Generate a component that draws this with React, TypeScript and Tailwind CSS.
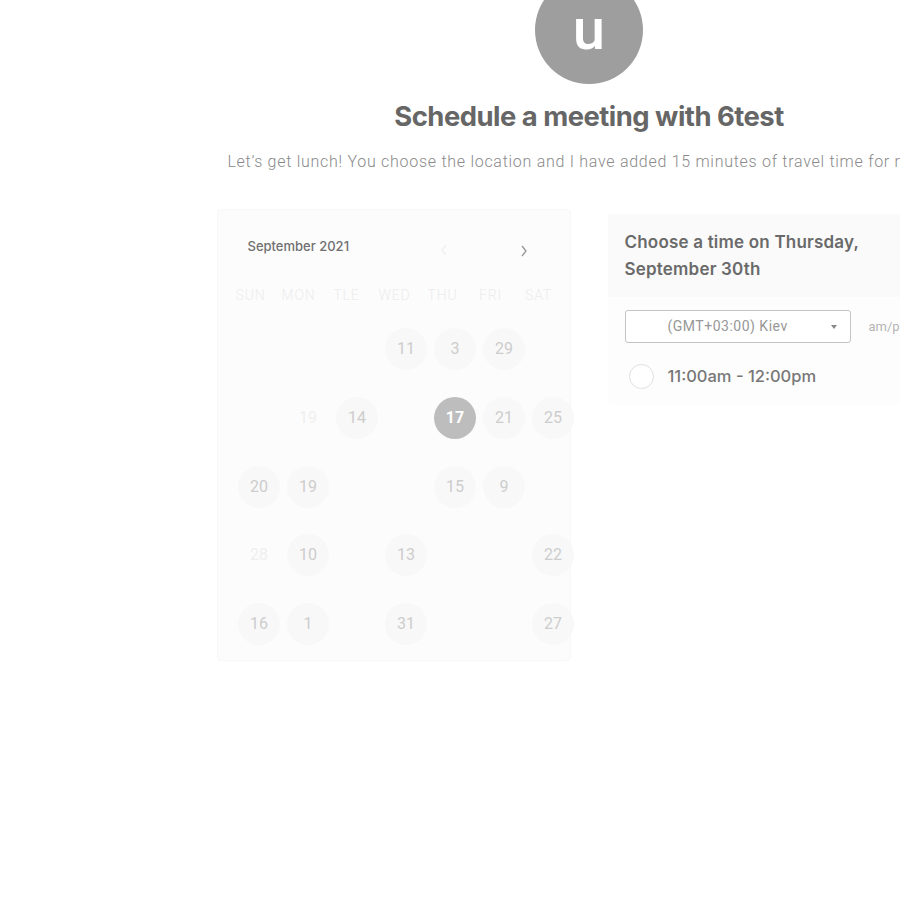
const days = [
  { d: '11', col: 4, row: 1, kind: 'day' },
  { d: '3', col: 5, row: 1, kind: 'day' },
  { d: '29', col: 6, row: 1, kind: 'day' },
  { d: '19', col: 2, row: 2, kind: 'ghost' },
  { d: '14', col: 3, row: 2, kind: 'day' },
  { d: '17', col: 5, row: 2, kind: 'selected' },
  { d: '21', col: 6, row: 2, kind: 'day' },
  { d: '25', col: 7, row: 2, kind: 'day' },
  { d: '20', col: 1, row: 3, kind: 'day' },
  { d: '19', col: 2, row: 3, kind: 'day' },
  { d: '15', col: 5, row: 3, kind: 'day' },
  { d: '9', col: 6, row: 3, kind: 'day' },
  { d: '28', col: 1, row: 4, kind: 'ghost' },
  { d: '10', col: 2, row: 4, kind: 'day' },
  { d: '13', col: 4, row: 4, kind: 'day' },
  { d: '22', col: 7, row: 4, kind: 'day' },
  { d: '16', col: 1, row: 5, kind: 'day' },
  { d: '1', col: 2, row: 5, kind: 'day' },
  { d: '31', col: 4, row: 5, kind: 'day' },
  { d: '27', col: 7, row: 5, kind: 'day' },
];

const colClass: Record<number, string> = {
  1: 'col-start-1',
  2: 'col-start-2',
  3: 'col-start-3',
  4: 'col-start-4',
  5: 'col-start-5',
  6: 'col-start-6',
  7: 'col-start-7',
};
const rowClass: Record<number, string> = {
  1: 'row-start-1',
  2: 'row-start-2',
  3: 'row-start-3',
  4: 'row-start-4',
  5: 'row-start-5',
};

const weekdays = ['SUN', 'MON', 'TLE', 'WED', 'THU', 'FRI', 'SAT'];

function DayCell({ d, col, row, kind }: { d: string; col: number; row: number; kind: string }) {
  const base = 'w-[42px] h-[42px] rounded-full flex items-center justify-center text-[16px]';
  let look = 'bg-[#f8f8f8] text-[#cdcdcd]';
  if (kind === 'selected') look = 'bg-[#bdbdbd] text-white font-bold';
  if (kind === 'ghost') look = 'text-[#efefef]';
  return (
    <div className={`${colClass[col]} ${rowClass[row]} flex items-center justify-center`}>
      <div className={`${base} ${look}`}>{d}</div>
    </div>
  );
}

export default function App() {
  return (
    <div className="w-[900px] h-[900px] overflow-hidden bg-white" style={{ fontFamily: 'Roboto, sans-serif' }}>
      <div className="w-[1178px] flex flex-col items-center">
        <div className="-mt-6 w-[108px] h-[108px] rounded-full bg-[#9e9e9e] flex items-center justify-center text-white">
          <span className="-mt-[2px] text-[58px] font-medium leading-[40px]">u</span>
        </div>

        <h1
          className="mt-[16px] text-[27.4px] font-bold text-[#666666] leading-[32px] tracking-[-0.5px]"
          style={{ fontFamily: 'Inter, sans-serif' }}
        >
          Schedule a meeting with 6test
        </h1>

        <p className="mt-[18px] text-[16px] font-light text-[#8a8a8a] leading-[24px] tracking-[0.72px] whitespace-nowrap">
          Let’s get lunch! You choose the location and I have added 15 minutes of travel time for myself.
        </p>

        <div className="mt-[35px] flex items-start gap-[37px]">
          {/* calendar */}
          <div className="w-[354px] h-[452px] bg-[#fcfcfc] border border-[#f7f7f7] rounded-sm">
            <div className="flex items-center h-[74px] pl-[30px]">
              <span className="text-[13px] font-medium text-[#707070]" style={{ fontFamily: 'Inter, sans-serif' }}>
                September 2021
              </span>
              <span className="ml-[90px] text-[#f0f0f0] mt-[6px]">
                <svg width="10" height="14" viewBox="0 0 10 14" fill="none" stroke="currentColor" strokeWidth="1.4">
                  <path d="M7 2 L3 7 L7 12" />
                </svg>
              </span>
              <span className="ml-[70px] text-[#9a9a9a] mt-[8px]">
                <svg width="10" height="14" viewBox="0 0 10 14" fill="none" stroke="currentColor" strokeWidth="1.4">
                  <path d="M3 2 L7 7 L3 12" />
                </svg>
              </span>
            </div>
            <div className="grid grid-cols-[repeat(7,48px)] ml-[9px] -mt-[3px] h-[28px] items-center text-[14px] font-light text-[#ececec] tracking-[0.8px]">
              {weekdays.map((w) => (
                <div key={w} className="text-center">
                  {w}
                </div>
              ))}
            </div>
            <div className="grid grid-cols-[repeat(7,49px)] grid-rows-[repeat(5,68.7px)] ml-[17px] mt-[6px]">
              {days.map((x, i) => (
                <DayCell key={i} {...x} />
              ))}
            </div>
          </div>

          {/* times */}
          <div className="w-[354px] mt-[5px] bg-[#fdfdfd] rounded-sm" style={{ fontFamily: 'Inter, sans-serif' }}>
            <div className="bg-[#fafafa] px-[17px] pt-[15px] pb-[14px] text-[17px] font-semibold text-[#6a6a6a] leading-[27px] tracking-[0.2px]">
              <div>Choose a time on Thursday,</div>
              <div>September 30th</div>
            </div>
            <div className="px-[17px] pt-[13px] flex items-center">
              <div className="w-[226px] h-[33px] border border-[#c4c4c4] rounded-[3px] flex items-center pl-[42px] pr-[13px] bg-white">
                <span className="text-[14px] text-[#979797] tracking-[0.5px]" style={{ fontFamily: 'Roboto, sans-serif' }}>
                  (GMT+03:00) Kiev
                </span>
                <span className="ml-auto w-0 h-0 border-l-[3px] border-r-[3px] border-t-[4px] border-l-transparent border-r-transparent border-t-[#888888]" />
              </div>
              <span className="ml-[18px] text-[13px] text-[#b5b5b5]" style={{ fontFamily: 'Roboto, sans-serif' }}>
                am/pm
              </span>
            </div>
            <div className="px-[21px] pt-[21px] pb-[16px] flex items-center">
              <span className="w-[25px] h-[25px] rounded-full border border-[#e0e0e0] bg-white" />
              <span className="ml-[14px] text-[16.5px] font-medium text-[#777777]">11:00am - 12:00pm</span>
            </div>
          </div>
        </div>
      </div>
    </div>
  );
}
